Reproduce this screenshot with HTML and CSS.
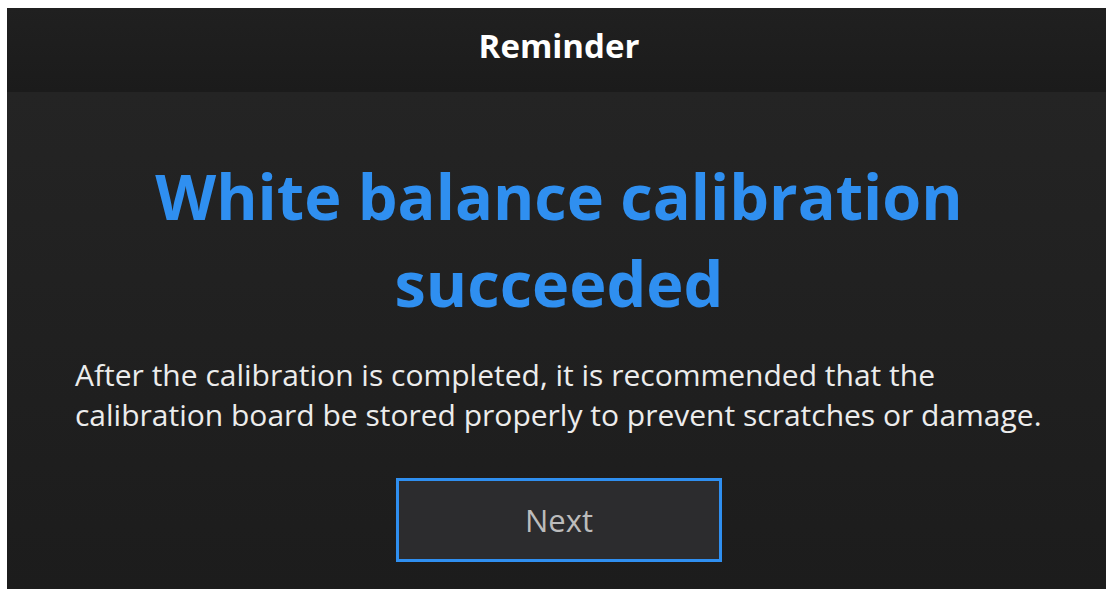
FILE: index.html
```html
<!DOCTYPE html>
<html lang="en">
<head>
<meta charset="utf-8">
<title>Reminder</title>
<link rel="stylesheet" href="styles.css">
</head>
<body>
<div class="dialog">
  <header class="dialog-header">Reminder</header>
  <main class="dialog-body">
    <h1 class="dialog-title">White balance calibration succeeded</h1>
    <p class="dialog-text">After the calibration is completed, it is recommended that the calibration board be stored properly to prevent scratches or damage.</p>
    <button class="btn-next" type="button">Next</button>
  </main>
</div>
</body>
</html>
```

FILE: styles.css
```css
html, body {
  margin: 0;
  padding: 0;
  background: #ffffff;
  overflow: hidden;
  width: 1106px;
  height: 589px;
}

.dialog {
  margin: 8px 0 0 7px;
  width: 1104px;
  height: 581px;
  display: flex;
  flex-direction: column;
  font-family: "Open Sans", "Noto Sans", sans-serif;
  background: #1e1e1e;
}

.dialog-header {
  height: 74px;
  padding-bottom: 10px;
  flex: none;
  display: flex;
  align-items: center;
  justify-content: center;
  background: linear-gradient(#202020, #1b1b1b);
  color: #ffffff;
  font-size: 33px;
  font-weight: 700;
}

.dialog-body {
  flex: 1;
  display: flex;
  flex-direction: column;
  align-items: center;
  background: linear-gradient(#242424, #1c1c1c);
  padding: 60px 0 0;
}

.dialog-title {
  margin: 0;
  width: 900px;
  text-align: center;
  color: #2f8ff0;
  font-size: 63px;
  font-weight: 700;
  line-height: 87px;
}

.dialog-text {
  margin: 29px 0 0;
  align-self: flex-start;
  padding-left: 68px;
  color: #ececec;
  font-size: 30px;
  line-height: 40px;
  width: 1000px;
}

.btn-next {
  margin-top: 43px;
  width: 326px;
  height: 84px;
  background: #2c2c2e;
  border: 3px solid #2f8ff0;
  color: #bcbcbc;
  font-family: inherit;
  font-size: 31px;
}
```
